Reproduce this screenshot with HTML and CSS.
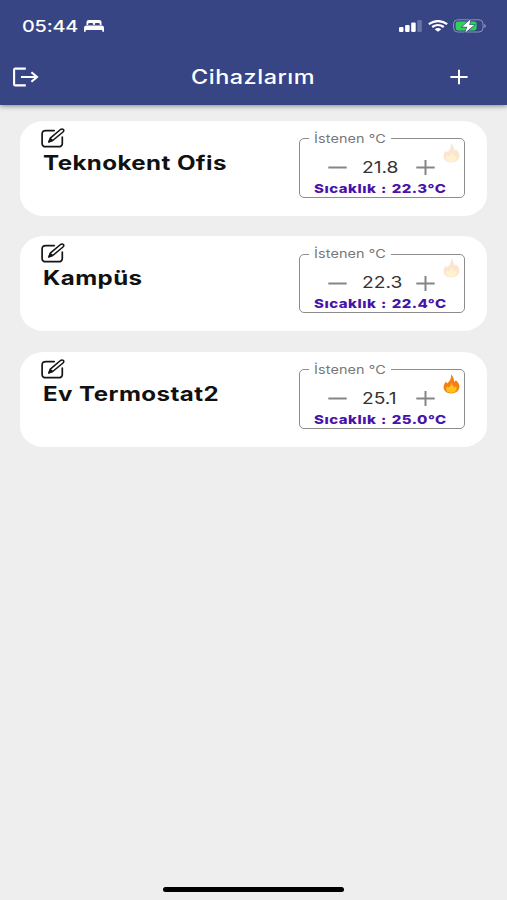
FILE: index.html
```html
<!DOCTYPE html>
<html lang="tr">
<head>
  <meta charset="UTF-8" />
  <title>Cihazlarım</title>
  <meta name="viewport" content="width=device-width, initial-scale=1" />
  <link rel="stylesheet" href="styles.css">
</head>
<body>
  <svg class="defs" width="0" height="0">
    <symbol id="edit" viewBox="0 0 24 20" fill="none" stroke="#151515" stroke-width="1.7" stroke-linecap="round" stroke-linejoin="round">
      <path d="M13.2 2.6H5Q1.1 2.6 1.1 6V15.4Q1.1 18.7 5 18.7H17.4Q21.3 18.7 21.3 15.4V9" />
      <path d="M8 13.8L9.3 10.2L19.5 1.5Q21.2 .5 22.4 1.5Q23.3 2.7 22 4L11.7 12.5Z" stroke-width="1.6" />
      <path d="M8 13.8L9.5 10.8L11.2 12.3Z" fill="#151515" />
    </symbol>
    <symbol id="minus" viewBox="0 0 19 17" stroke="#858585" stroke-width="2">
      <path d="M.3 8.5H18.7" />
    </symbol>
    <symbol id="plus" viewBox="0 0 19 17" stroke="#858585" stroke-width="2">
      <path d="M.3 8.5H18.7M9.5 1V16" />
    </symbol>
    <symbol id="flame" viewBox="0 0 17 20">
      <path d="M8 .6C10.4 2.5 11 5 11.1 7.8C12 7.5 12.5 7 12.9 6.2C15.2 8 16.4 10.4 16.4 12.8C16.2 17 12.8 19.4 8.4 19.4C3.8 19.4 .6 16.9 .6 13.2C.6 10.8 1.8 9.4 2.6 7.8C3.4 8.3 3.9 8.8 4.2 9.4C7 7.2 8.6 4.3 8 .6Z" fill="#f57f14" />
      <path d="M8.2 8.8C8.8 11 11 12 11.4 13.8C12.1 13.4 12.5 12.8 12.7 12.1C13.8 13.5 13.9 14.8 13.4 16C12.5 18 10.6 18.8 8.4 18.8C5.5 18.8 3.3 17.5 3.1 15.2C3 13.8 3.5 12.9 4.2 12C4.7 12.8 5.1 13.2 5.7 13.5C7.5 12.2 8.5 10.8 8.2 8.8Z" fill="#fdc41c" />
    </symbol>
  </svg>

  <header class="header">
    <div class="status">
      <span class="time"><span class="wide">05:44</span></span>
      <svg class="bed" width="20" height="14" viewBox="0 0 20 14" fill="#fff">
        <path d="M2.5 6V3Q2.5 1 5 1H15Q17.5 1 17.5 3V6H15.8V5Q15.8 4 14.5 4H12Q10.8 4 10.8 5V6H9.2V5Q9.2 4 8 4H5.5Q4.2 4 4.2 5V6Z" />
        <path d="M0 12.7V9Q0 6.6 2.5 6.6H17.5Q20 6.6 20 9V12.7H18.3V11H1.7V12.7Z" />
      </svg>
      <span class="spacer"></span>
      <svg class="signal" width="23" height="12" viewBox="0 0 23 12" fill="#fff">
        <rect x="0" y="7" width="4.5" height="5" rx="1.2" />
        <rect x="6.1" y="5" width="4.5" height="7" rx="1.2" />
        <rect x="12.2" y="2.4" width="4.5" height="9.6" rx="1.2" />
        <rect x="18.3" y="0" width="4.5" height="12" rx="1.2" opacity=".25" />
      </svg>
      <svg class="wifi" width="20" height="12" viewBox="0 0 20 12" fill="none" stroke="#fff" stroke-width="2.2">
        <path d="M.8 4.1Q10-2 19.2 4.1" />
        <path d="M4.2 7Q10 3 15.8 7" />
        <path d="M6.7 9.2Q10 7 13.3 9.2L10 11.8Z" fill="#fff" stroke="none" />
      </svg>
      <svg class="battery" width="33" height="14" viewBox="0 0 33 14">
        <rect x=".6" y=".8" width="29.4" height="12.2" rx="4" fill="none" stroke="#8b92bd" />
        <path d="M31.2 5Q32.8 5.5 32.8 7T31.2 9Z" fill="#8b92bd" />
        <rect x="2.6" y="2.4" width="21" height="9" rx="2.4" fill="#30d158" />
        <path d="M17.7 .3L9.2 7.8H14.2L12.3 13.6L21.3 6H16.2Z" fill="#fff" stroke="#384585" stroke-width="1.2" paint-order="stroke" />
      </svg>
    </div>
    <div class="navbar">
      <svg class="logout" width="26" height="20" viewBox="0 0 26 20" fill="none" stroke="#fff" stroke-width="2.1">
        <path d="M12.8 1.6H2.2Q1.1 1.6 1.1 2.8V17.2Q1.1 18.4 2.2 18.4H12.8" />
        <path d="M8 10H23.5M18.4 5.2L24 10L18.4 14.8" />
      </svg>
      <h1 class="title"><span class="wide">Cihazlarım</span></h1>
      <svg class="add" width="18" height="16" viewBox="0 0 18 16" stroke="#fff" stroke-width="2">
        <path d="M.4 8H17.6M9 .8V15.2" />
      </svg>
    </div>
  </header>

  <main class="devices">
    <section class="card">
      <div class="info">
        <svg class="edit" width="24" height="20"><use href="#edit" /></svg>
        <h2 class="name"><span class="wide">Teknokent Ofis</span></h2>
      </div>
      <fieldset class="thermostat">
        <legend><span class="wide">İstenen °C</span></legend>
        <div class="stepper">
          <svg width="19" height="17"><use href="#minus" /></svg>
          <span class="value"><span class="wide">21.8</span></span>
          <svg width="19" height="17"><use href="#plus" /></svg>
        </div>
        <div class="current"><span class="wide">Sıcaklık : 22.3°C</span></div>
        <svg class="flame off" width="17" height="20"><use href="#flame" /></svg>
      </fieldset>
    </section>

    <section class="card">
      <div class="info">
        <svg class="edit" width="24" height="20"><use href="#edit" /></svg>
        <h2 class="name"><span class="wide">Kampüs</span></h2>
      </div>
      <fieldset class="thermostat">
        <legend><span class="wide">İstenen °C</span></legend>
        <div class="stepper">
          <svg width="19" height="17"><use href="#minus" /></svg>
          <span class="value"><span class="wide">22.3</span></span>
          <svg width="19" height="17"><use href="#plus" /></svg>
        </div>
        <div class="current"><span class="wide">Sıcaklık : 22.4°C</span></div>
        <svg class="flame off" width="17" height="20"><use href="#flame" /></svg>
      </fieldset>
    </section>

    <section class="card">
      <div class="info">
        <svg class="edit" width="24" height="20"><use href="#edit" /></svg>
        <h2 class="name"><span class="wide">Ev Termostat2</span></h2>
      </div>
      <fieldset class="thermostat">
        <legend><span class="wide">İstenen °C</span></legend>
        <div class="stepper">
          <svg width="19" height="17"><use href="#minus" /></svg>
          <span class="value"><span class="wide">25.1</span></span>
          <svg width="19" height="17"><use href="#plus" /></svg>
        </div>
        <div class="current"><span class="wide">Sıcaklık : 25.0°C</span></div>
        <svg class="flame" width="17" height="20"><use href="#flame" /></svg>
      </fieldset>
    </section>
  </main>

  <div class="home-bar"></div>
</body>
</html>
```

FILE: styles.css
```css
* {
  box-sizing: border-box;
}

body {
  margin: 0;
  height: 900px;
  display: flex;
  flex-direction: column;
  background: #eee;
  font-family: Inter, 'Liberation Sans', sans-serif;
  color: #111;
  overflow: hidden;
}

svg {
  display: block;
  flex: none;
}

.defs {
  position: absolute;
}

/* expanded letterforms */
.wide {
  display: inline-block;
  white-space: nowrap;
  transform: scaleX(1.2);
  transform-origin: left center;
}

.header {
  height: 105px;
  background: #384585;
  color: #fff;
  box-shadow: 0 1px 5px rgba(0,0,0,0.45);
}

.status {
  display: flex;
  align-items: center;
  height: 52px;
  padding: 0 21px 0 22px;
}

.time {
  width: 62px;
  font-size: 16.5px;
  font-weight: 500;
  letter-spacing: -0.15px;
}

.spacer {
  flex: 1;
}

.signal {
  margin-right: 6px;
}

.wifi {
  margin-right: 5px;
}

.navbar {
  display: flex;
  align-items: center;
  justify-content: space-between;
  height: 50px;
  padding: 0 39px 0 13px;
}

.title {
  width: 124px;
  margin: 0 0 0 17px;
  font-size: 19.5px;
  font-weight: 500;
  letter-spacing: 0.45px;
}

.devices {
  display: flex;
  flex-direction: column;
  gap: 20.5px;
  padding: 15.5px 20px 0;
}

.card {
  display: flex;
  justify-content: space-between;
  height: 95px;
  padding: 7px 22px 0 21px;
  background: #fff;
  border-radius: 24px / 21px;
}

.name {
  margin: 2px 0 0 1.5px;
  font-size: 19.5px;
  line-height: 26px;
  font-weight: 650;
  letter-spacing: 0.35px;
}

.name .wide {
  transform: scaleX(1.235);
}

.thermostat {
  position: relative;
  width: 166px;
  height: 67px;
  margin: 3px 0 0;
  padding: 0;
  border: 1.5px solid #8c8c8c;
  border-radius: 5px;
}

.thermostat legend {
  width: 82px;
  margin-left: 9px;
  padding: 0 0 0 5px;
  font-size: 12px;
  line-height: 16px;
  color: #777;
  letter-spacing: 0.1px;
}

.stepper {
  display: flex;
  align-items: center;
  justify-content: space-between;
  width: 107px;
  height: 20px;
  margin: 11px 0 0 28px;
}

.value {
  width: 39px;
  font-size: 16px;
  line-height: 20px;
  color: #333;
}

.value .wide {
  position: relative;
  top: -1px;
}

.current {
  margin: 3px 0 0 13.5px;
  font-size: 12px;
  line-height: 15px;
  font-weight: 800;
  color: #4a12a8;
  letter-spacing: 0.4px;
  word-spacing: 0.8px;
}

.current .wide {
  transform: scaleX(1.25);
}

.flame {
  position: absolute;
  top: -4px;
  right: 4px;
}

.flame.off {
  opacity: 0.2;
}

.home-bar {
  width: 181px;
  height: 5px;
  margin: auto auto 8px;
  background: #000;
  border-radius: 3px;
}
```
